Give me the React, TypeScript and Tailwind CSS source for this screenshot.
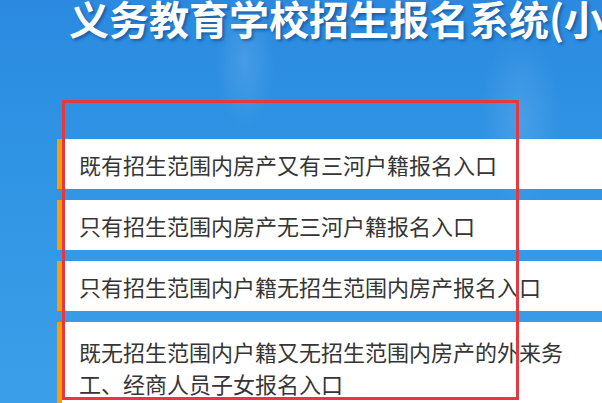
import React from "react";

const rows = [
  "既有招生范围内房产又有三河户籍报名入口",
  "只有招生范围内房产无三河户籍报名入口",
  "只有招生范围内户籍无招生范围内房产报名入口",
];

export default function App() {
  return (
    <div
      className="relative w-[602px] h-[403px] overflow-hidden bg-[radial-gradient(ellipse_30px_70px_at_245px_60px,rgba(255,255,255,0.12),transparent),radial-gradient(ellipse_40px_90px_at_520px_120px,rgba(255,255,255,0.12),transparent),linear-gradient(180deg,#2b8ae0_0%,#3094e4_40%,#3c9fe9_100%)]"
      style={{ fontFamily: '"Noto Sans CJK SC", "Noto Sans", sans-serif' }}
    >
      <div className="h-[41px] pl-[69px] whitespace-nowrap">
        <h1 className="-mt-[2px] text-[40px] leading-[40px] font-bold text-white [text-shadow:2px_2px_3px_rgba(0,40,90,0.45)]">
          义务教育学校招生报名系统(小学)
        </h1>
      </div>

      <div className="mt-[100px] pl-[57px] flex flex-col gap-[11px]">
        {rows.map((t) => (
          <div
            key={t}
            className="w-[600px] h-[50px] flex items-center bg-white border-l-[5px] border-[#ff9a0a] pl-[17px]"
          >
            <span className="text-[22px] leading-[32px] text-[#353535] whitespace-nowrap">{t}</span>
          </div>
        ))}
        <div className="w-[600px] h-[90px] bg-white border-l-[5px] border-[#ff9a0a] pl-[17px] pt-[13px]">
          <p className="max-w-[490px] text-[22px] leading-[32px] text-[#353535]">
            既无招生范围内户籍又无招生范围内房产的外来务工、经商人员子女报名入口
          </p>
        </div>
      </div>

      <div className="absolute left-[62px] top-[100px] w-[457px] h-[300px] border-[3px] border-[#e6393f] pointer-events-none" />
    </div>
  );
}
